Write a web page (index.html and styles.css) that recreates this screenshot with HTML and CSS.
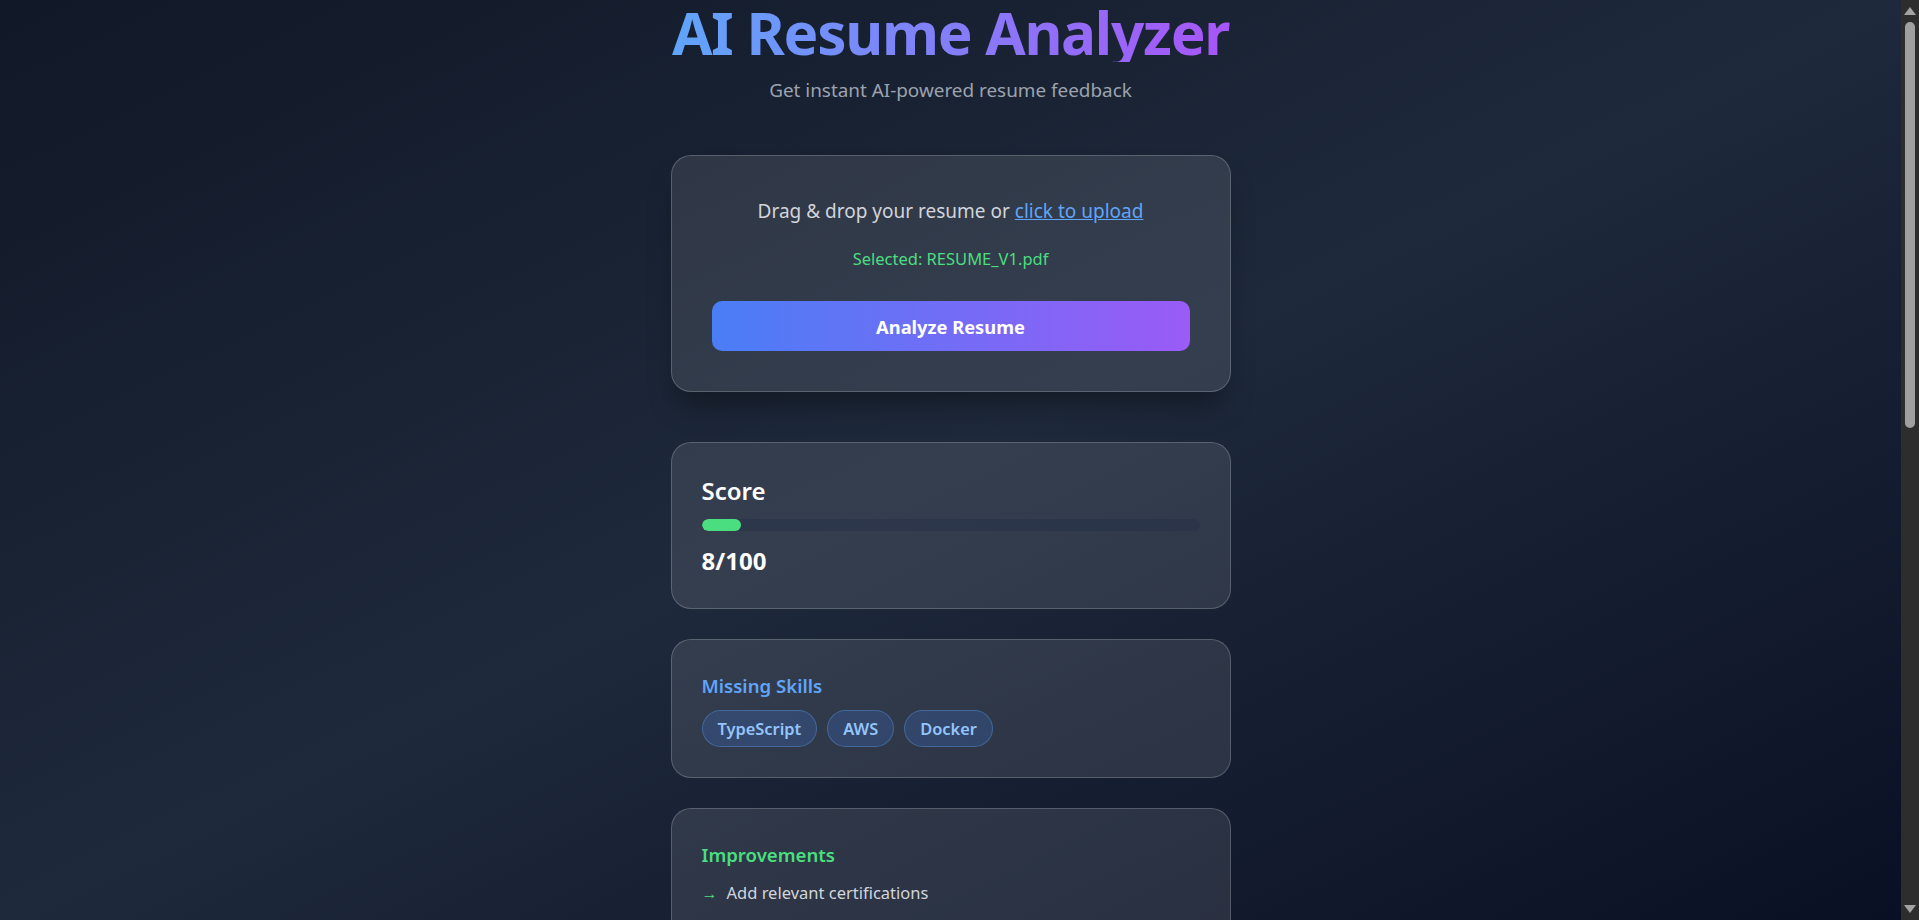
FILE: index.html
```html
<!DOCTYPE html>
<html lang="en">
<head>
<meta charset="utf-8">
<title>AI Resume Analyzer</title>
<link rel="stylesheet" href="styles.css">
</head>
<body>
<div class="screen">
  <div class="viewport">
    <main class="page">
      <header class="header">
        <h1 class="title">AI Resume Analyzer</h1>
        <p class="subtitle">Get instant AI-powered resume feedback</p>
      </header>

      <section class="card card-upload">
        <p class="drop-text">Drag &amp; drop your resume or <a class="upload-link" href="#">click to upload</a></p>
        <p class="selected">Selected: RESUME_V1.pdf</p>
        <button class="analyze-btn" type="button">Analyze Resume</button>
      </section>

      <div class="results">
        <section class="card">
          <h2 class="score-title">Score</h2>
          <div class="bar"><div class="bar-fill" style="width: 8%"></div></div>
          <p class="score-value">8/100</p>
        </section>

        <section class="card">
          <h3 class="section-title blue">Missing Skills</h3>
          <div class="tags">
            <span class="tag">TypeScript</span>
            <span class="tag">AWS</span>
            <span class="tag">Docker</span>
          </div>
        </section>

        <section class="card">
          <h3 class="section-title green">Improvements</h3>
          <ul class="list">
            <li class="list-item"><span class="arrow">→</span><span>Add relevant certifications</span></li>
            <li class="list-item"><span class="arrow">→</span><span>Quantify achievements with measurable results</span></li>
            <li class="list-item"><span class="arrow">→</span><span>Add a concise professional summary</span></li>
            <li class="list-item"><span class="arrow">→</span><span>Highlight cloud and DevOps experience</span></li>
          </ul>
        </section>

        <section class="card">
          <h3 class="section-title purple">Strengths</h3>
          <ul class="list">
            <li class="list-item"><span class="arrow purple-text">✓</span><span>Clear and readable layout</span></li>
            <li class="list-item"><span class="arrow purple-text">✓</span><span>Strong JavaScript and React background</span></li>
            <li class="list-item"><span class="arrow purple-text">✓</span><span>Consistent formatting</span></li>
          </ul>
        </section>

        <section class="card">
          <h3 class="section-title blue">Summary</h3>
          <p class="summary">Your resume shows a solid frontend foundation. Adding missing skills and measurable impact will improve your match rate for most developer roles.</p>
        </section>
      </div>
    </main>
  </div>

  <div class="scrollbar" aria-hidden="true">
    <div class="sb-btn sb-up">
      <svg width="12" height="8" viewBox="0 0 12 8"><polygon points="6,0 12,8 0,8" fill="#a3a3a3"/></svg>
    </div>
    <div class="sb-track"><div class="sb-thumb"></div></div>
    <div class="sb-btn sb-down">
      <svg width="12" height="8" viewBox="0 0 12 8"><polygon points="0,0 12,0 6,8" fill="#a3a3a3"/></svg>
    </div>
  </div>
</div>
</body>
</html>
```
FILE: styles.css
```css
html, body {
  margin: 0;
  padding: 0;
  height: 100%;
  overflow: hidden;
  background: #111827;
  font-family: "Noto Sans", "Open Sans", "DejaVu Sans", sans-serif;
}

.screen {
  display: flex;
  height: 100vh;
}

.viewport {
  flex: 1;
  min-width: 0;
  overflow: hidden;
  background: linear-gradient(to bottom right, #111827 0%, #1e293b 50%, #0a1023 100%);
}

.page {
  width: 560px;
  margin: 0 auto;
  padding-top: 2px;
  padding-bottom: 60px;
}

.header {
  text-align: center;
}

.title {
  margin: 0 -20px;
  font-size: 58.5px;
  line-height: 60px;
  font-weight: 700;
  letter-spacing: -1.3px;
  white-space: nowrap;
  background: linear-gradient(to right, #60a5fa 20px, #a855f7 calc(100% - 20px));
  -webkit-background-clip: text;
  background-clip: text;
  color: transparent;
}

.subtitle {
  margin: 13px 0 0;
  font-size: 18.9px;
  line-height: 30px;
  color: #9ca3af;
}

.card {
  box-sizing: border-box;
  background: rgba(255, 255, 255, 0.1);
  border: 1px solid rgba(255, 255, 255, 0.2);
  border-radius: 20px;
  padding: 30px;
}

.card-upload {
  margin-top: 50px;
  padding: 40px;
  text-align: center;
  box-shadow: 0 20px 30px -8px rgba(0, 0, 0, 0.35);
}

.drop-text {
  margin: 0;
  font-size: 19px;
  line-height: 30px;
  color: #d1d5db;
}

.upload-link {
  color: #60a5fa;
  text-decoration: underline;
}

.selected {
  margin: 20px 0 0;
  font-size: 16.5px;
  line-height: 25px;
  color: #4ade80;
}

.analyze-btn {
  display: block;
  width: 100%;
  height: 50px;
  margin-top: 30px;
  border: 0;
  border-radius: 10px;
  background: linear-gradient(to right, #4a7ef6, #9b5bf6);
  color: #ffffff;
  font-family: inherit;
  font-size: 18.3px;
  font-weight: 700;
  cursor: pointer;
}

.results {
  margin-top: 50px;
  display: flex;
  flex-direction: column;
  gap: 30px;
}

.score-title {
  margin: 0;
  font-size: 24px;
  line-height: 35px;
  font-weight: 600;
  color: #ffffff;
}

.bar {
  margin-top: 11px;
  height: 12px;
  border-radius: 9999px;
  background: rgba(30, 41, 70, 0.3);
  overflow: hidden;
}

.bar-fill {
  height: 100%;
  border-radius: 9999px;
  background: #4ade80;
}

.score-value {
  margin: 12px 0 0;
  font-size: 24px;
  line-height: 35px;
  font-weight: 700;
  color: #ffffff;
}

.section-title {
  margin: 0;
  font-size: 18.6px;
  line-height: 32px;
  font-weight: 600;
}

.blue { color: #60a5fa; }
.green { color: #4ade80; }
.purple { color: #c084fc; }
.purple-text { color: #c084fc; }

.tags {
  margin-top: 8px;
  display: flex;
  flex-wrap: wrap;
  gap: 10px;
}

.tag {
  padding: 5px 15px;
  font-size: 16.4px;
  line-height: 25px;
  font-weight: 600;
  color: #93c5fd;
  background: rgba(59, 130, 246, 0.2);
  border: 1px solid rgba(96, 165, 250, 0.35);
  border-radius: 9999px;
}

.list {
  margin: 9px 0 0;
  padding: 0;
  list-style: none;
  display: flex;
  flex-direction: column;
  gap: 8px;
}

.list-item {
  display: flex;
  align-items: baseline;
  font-size: 16.5px;
  line-height: 25px;
  color: #d1d5db;
}

.arrow {
  color: #4ade80;
  font-family: "Liberation Sans", "DejaVu Sans", sans-serif;
  font-size: 16px;
  margin-right: 9px;
}

.summary {
  margin: 9px 0 0;
  font-size: 16.5px;
  line-height: 25px;
  color: #d1d5db;
}

/* fake classic scrollbar */
.scrollbar {
  width: 18px;
  flex: none;
  background: #2d2d2d;
  display: flex;
  flex-direction: column;
}

.sb-btn {
  box-sizing: border-box;
  height: 22px;
  display: flex;
  justify-content: center;
}

.sb-up {
  align-items: flex-start;
  padding-top: 7px;
}

.sb-down {
  align-items: flex-end;
  padding-bottom: 7px;
}

.sb-btn svg {
  display: block;
}

.sb-track {
  flex: 1;
  display: flex;
  justify-content: center;
}

.sb-thumb {
  width: 10px;
  height: 406px;
  border-radius: 5px;
  background: #a0a0a0;
}
```
